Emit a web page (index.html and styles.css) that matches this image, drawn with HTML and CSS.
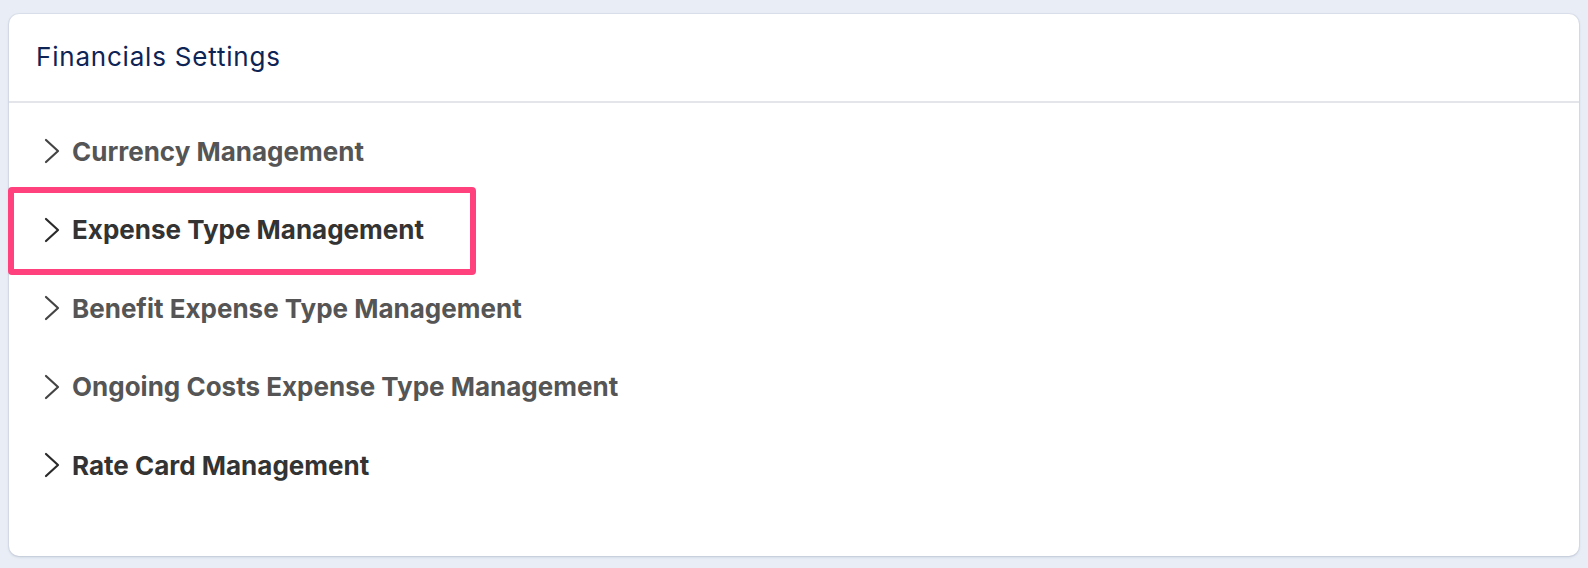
FILE: index.html
```html
<!DOCTYPE html>
<html lang="en">
<head>
<meta charset="utf-8">
<title>Financials Settings</title>
<link rel="stylesheet" href="styles.css">
</head>
<body>
<section class="card">
  <header class="card-header">
    <h1 class="card-title">Financials Settings</h1>
  </header>
  <ul class="menu">
    <li class="menu-item muted">
      <svg class="chev" viewBox="0 0 16 26" width="16" height="26"><path d="M2 2 L14 13 L2 24" /></svg>
      <span>Currency Management</span>
    </li>
    <li class="menu-item strong highlighted">
      <svg class="chev" viewBox="0 0 16 26" width="16" height="26"><path d="M2 2 L14 13 L2 24" /></svg>
      <span>Expense Type Management</span>
    </li>
    <li class="menu-item muted">
      <svg class="chev" viewBox="0 0 16 26" width="16" height="26"><path d="M2 2 L14 13 L2 24" /></svg>
      <span>Benefit Expense Type Management</span>
    </li>
    <li class="menu-item muted">
      <svg class="chev" viewBox="0 0 16 26" width="16" height="26"><path d="M2 2 L14 13 L2 24" /></svg>
      <span>Ongoing Costs Expense Type Management</span>
    </li>
    <li class="menu-item strong">
      <svg class="chev" viewBox="0 0 16 26" width="16" height="26"><path d="M2 2 L14 13 L2 24" /></svg>
      <span>Rate Card Management</span>
    </li>
  </ul>
</section>
</body>
</html>
```
FILE: styles.css
```css
*, *::before, *::after { box-sizing: border-box; }
html, body { margin: 0; height: 100%; }
body {
  background: #e9eef6;
  padding: 14px 9px 12px 9px;
  font-family: Inter, "Noto Sans", sans-serif;
}
.card {
  background: #ffffff;
  border-radius: 10px;
  box-shadow: 0 1px 3px rgba(40, 55, 90, 0.18), 0 0 0 1px rgba(40, 55, 90, 0.05);
  height: 542px;
  display: flex;
  flex-direction: column;
}
.card-header {
  height: 89px;
  display: flex;
  align-items: center;
  padding: 0 27px 2px 27px;
  border-bottom: 2px solid #e3e5ea;
}
.card-title {
  margin: 0;
  font-size: 26px;
  font-weight: 400;
  color: #0e2455;
  letter-spacing: 0.8px;
}
.menu {
  list-style: none;
  margin: 0;
  padding: 9px 0 0 0;
}
.menu-item {
  position: relative;
  height: 78.5px;
  display: flex;
  align-items: center;
  gap: 12px;
  padding-left: 35px;
  font-size: 26px;
  font-weight: 700;
}
.menu-item.muted { color: #555555; }
.menu-item.strong { color: #333333; }
.chev {
  flex: none;
  fill: none;
  stroke: #444444;
  stroke-width: 2.2;
  stroke-linecap: round;
  stroke-linejoin: round;
}
.strong .chev { stroke: #2a2a2a; }
.highlighted::after {
  content: "";
  position: absolute;
  left: -1px;
  top: -4px;
  width: 468px;
  height: 88px;
  border: 6px solid #ff417d;
  border-radius: 4px;
  pointer-events: none;
}
```
